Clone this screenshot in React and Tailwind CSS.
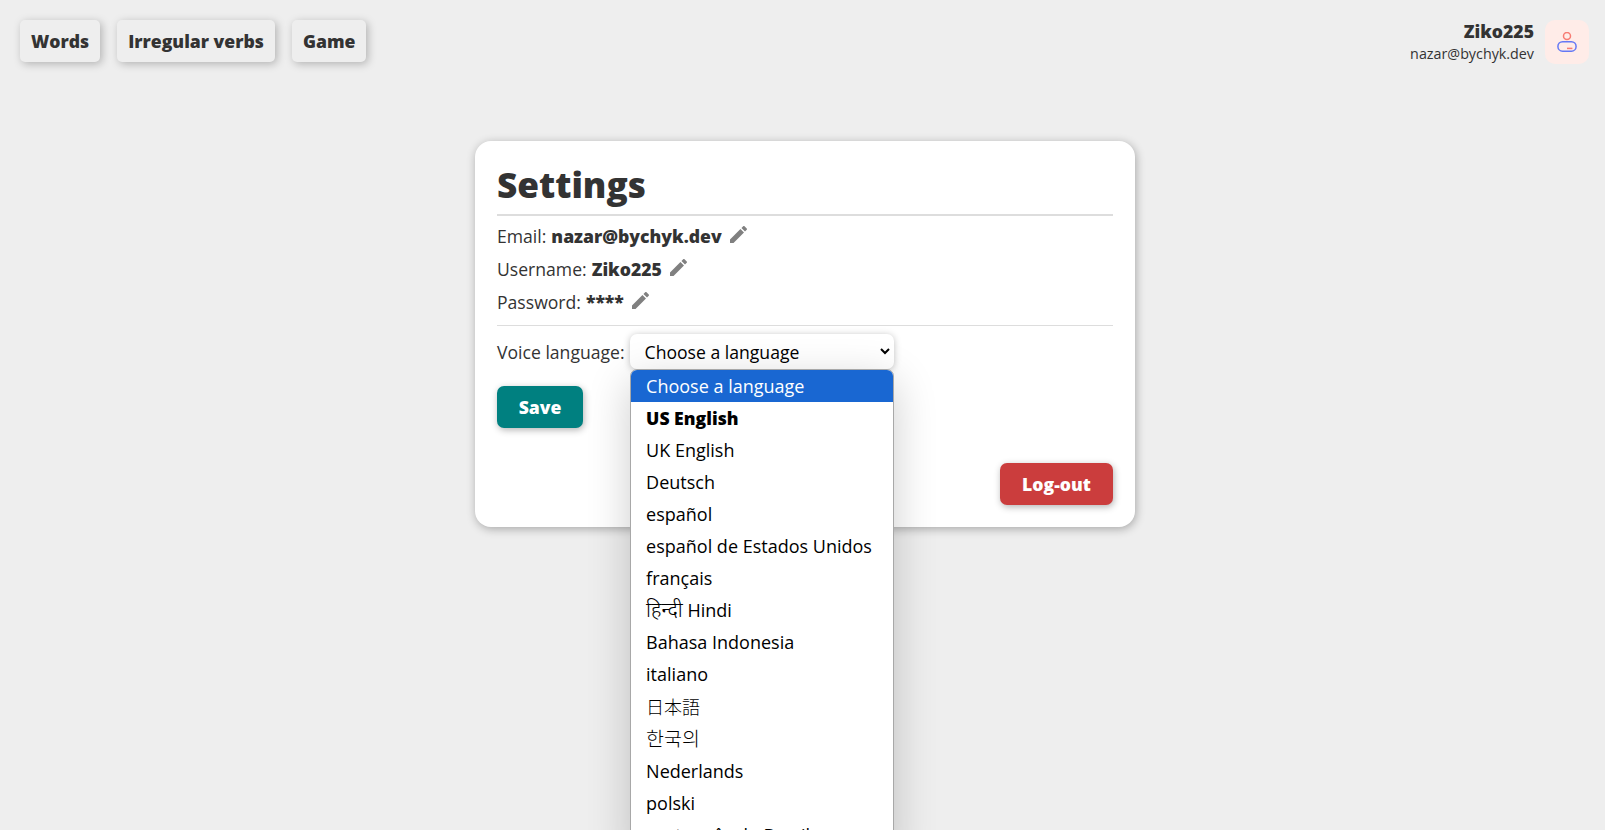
const NAV = ['Words', 'Irregular verbs', 'Game'];

const FIELDS = [
  { label: 'Email:', value: 'nazar@bychyk.dev' },
  { label: 'Username:', value: 'Ziko225' },
  { label: 'Password:', value: '****' },
];

const LANGUAGES = [
  { name: 'Choose a language', style: 'h-8 leading-8 bg-[#1967d2] text-white' },
  { name: 'US English', style: 'h-8 leading-8 font-extrabold text-[17.6px]' },
  { name: 'UK English' },
  { name: 'Deutsch' },
  { name: 'español' },
  { name: 'español de Estados Unidos' },
  { name: 'français' },
  { name: <><span className="text-[20.5px] leading-none font-light">हिन्दी</span> Hindi</> },
  { name: 'Bahasa Indonesia' },
  { name: 'italiano' },
  { name: '日本語', style: 'h-[33px] leading-[34px] font-light' },
  { name: '한국의', style: 'h-8 leading-8 font-light text-[19.5px]' },
  { name: 'Nederlands' },
  { name: 'polski' },
  { name: 'português do Brasil' },
];

function PencilIcon() {
  return (
    <svg viewBox="3 3 18 18" className="mb-[5px] ml-2 size-[17px] fill-[#808080]">
      <path d="M3 17.25V21h3.75L17.81 9.94l-3.75-3.75L3 17.25zM20.71 7.04c.39-.39.39-1.02 0-1.41l-2.34-2.34c-.39-.39-1.02-.39-1.41 0l-1.83 1.83 3.75 3.75 1.83-1.83z" />
    </svg>
  );
}

function Header() {
  return (
    <header className="flex h-[82px] shrink-0 items-start justify-between pt-5 pr-4 pl-5">
      <nav className="flex gap-[17px]">
        {NAV.map((item) => (
          <a
            key={item}
            className="flex h-[42px] items-center rounded-[5px] px-[11px] font-extrabold shadow-[2px_2px_8px_rgba(0,0,0,0.25)]"
          >
            {item}
          </a>
        ))}
      </nav>
      <div className="flex gap-[11px]">
        <div className="flex flex-col items-end">
          <span className="h-[23px] leading-[23px] font-extrabold">Ziko225</span>
          <span className="text-[14.3px] leading-[22px]">nazar@bychyk.dev</span>
        </div>
        <div className="flex size-11 items-center justify-center rounded-[10px] bg-[#ffece8]">
          <svg viewBox="0 0 20 20" className="size-5" fill="none" strokeWidth="1.5">
            <circle cx="10" cy="4" r="3.5" stroke="#f77c74" />
            <rect x="0.9" y="9.7" width="18.2" height="9.5" rx="4.7" stroke="#6478f5" />
            <path d="M10 16.4h5.4" stroke="#f77c74" />
          </svg>
        </div>
      </div>
    </header>
  );
}

function LanguageSelect() {
  return (
    <div className="relative ml-[5px] shrink-0">
      <div className="flex h-[35px] w-[264px] items-center justify-between rounded-[7px] bg-white pr-1 pl-[15px] text-black shadow-[0_1px_7px_rgba(0,0,0,0.25)]">
        <span className="pt-0.5">Choose a language</span>
        <svg viewBox="0 0 10 7" className="h-[7px] w-2.5" fill="none" stroke="currentColor" strokeWidth="2">
          <path d="M1 1l4 4 4-4" />
        </svg>
      </div>
      <ul className="absolute top-[35px] left-0 w-[264px] overflow-hidden rounded-t-[7px] border border-[#a8a8a8] bg-white text-[18px] text-black shadow-[0_12px_44px_rgba(0,0,0,0.2)]">
        {LANGUAGES.map(({ name, style = 'h-8 leading-8' }, index) => (
          <li key={index} className={`pl-[15.5px] whitespace-nowrap ${style}`}>
            {name}
          </li>
        ))}
      </ul>
    </div>
  );
}

export default function App() {
  return (
    <div className="flex h-[830px] flex-col overflow-hidden bg-[#eee] font-['Open_Sans','Noto_Sans','Noto_Sans_CJK_JP','Noto_Sans_CJK_KR',sans-serif] text-[17.6px] text-[#333]">
      <Header />
      <main className="mt-[59px] ml-[475px] flex h-[386px] w-[660px] flex-col rounded-2xl bg-white p-[22px] shadow-[1px_2px_10px_rgba(0,0,0,0.3)]">
        <h1 className="h-[53px] shrink-0 border-b-2 border-[#ddd] text-[35.2px] leading-[42px] font-extrabold">Settings</h1>
        <div className="flex h-[110px] shrink-0 flex-col border-b border-[#ddd] pt-1">
          {FIELDS.map((field) => (
            <div key={field.label} className="flex h-[33px] items-center">
              <span>{field.label}</span>
              <strong className="ml-[5px] font-extrabold">{field.value}</strong>
              <PencilIcon />
            </div>
          ))}
        </div>
        <div className="mt-2 flex h-[35px] shrink-0 items-center">
          <span className="pt-0.5">Voice language:</span>
          <LanguageSelect />
        </div>
        <button className="mt-[17px] h-[42px] w-[86px] shrink-0 rounded-[7px] bg-[#008080] font-extrabold text-white shadow-[1px_2px_7px_rgba(0,0,0,0.3)]">
          Save
        </button>
        <button className="mt-auto h-[42px] w-[113px] shrink-0 self-end rounded-[7px] bg-[#cb3d3d] font-extrabold text-white shadow-[1px_2px_7px_rgba(0,0,0,0.3)]">
          Log-out
        </button>
      </main>
    </div>
  );
}
